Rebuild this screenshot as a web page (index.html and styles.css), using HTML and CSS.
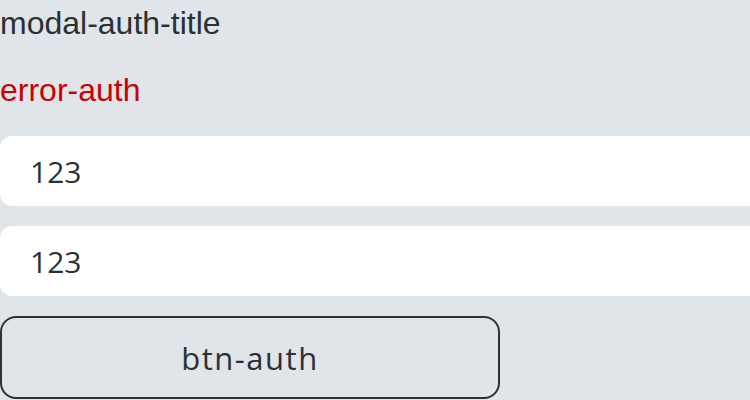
FILE: index.html
```html
<!DOCTYPE html>
<html>
<head><link rel="stylesheet" href="styles.css"></head>
<body>
<div class="modal">
  <h2 class="title">modal-auth-title</h2>
  <p class="error">error-auth</p>
  <input class="field" type="text" value="123">
  <input class="field" type="text" value="123">
  <button class="btn">btn-auth</button>
</div>
</body>
</html>
```
FILE: styles.css
```css
html, body { margin: 0; padding: 0; }
body { background: #dfe5e8; font-family: "Liberation Sans", Arial, sans-serif; overflow: hidden; }
.modal { display: flex; flex-direction: column; align-items: flex-start; gap: 20px; padding-top: 5px; }
.title { margin: 0 0 11px; font-size: 32px; font-weight: normal; color: #2b3035; line-height: 36px; }
.error { margin: 0 0 8px; font-size: 32px; color: #cc0000; line-height: 36px; }
.field { box-sizing: border-box; width: 780px; height: 70px; border: none; border-radius: 12px; background: #fff; padding: 0 30px; font-family: "Open Sans", sans-serif; font-size: 30px; color: #2b3035; outline: none; }
.btn { box-sizing: border-box; width: 500px; height: 83px; border: 2px solid #2c3338; border-radius: 16px; background: transparent; font-family: "Open Sans", sans-serif; font-size: 31px; letter-spacing: 1.5px; color: #2b3035; }
```
